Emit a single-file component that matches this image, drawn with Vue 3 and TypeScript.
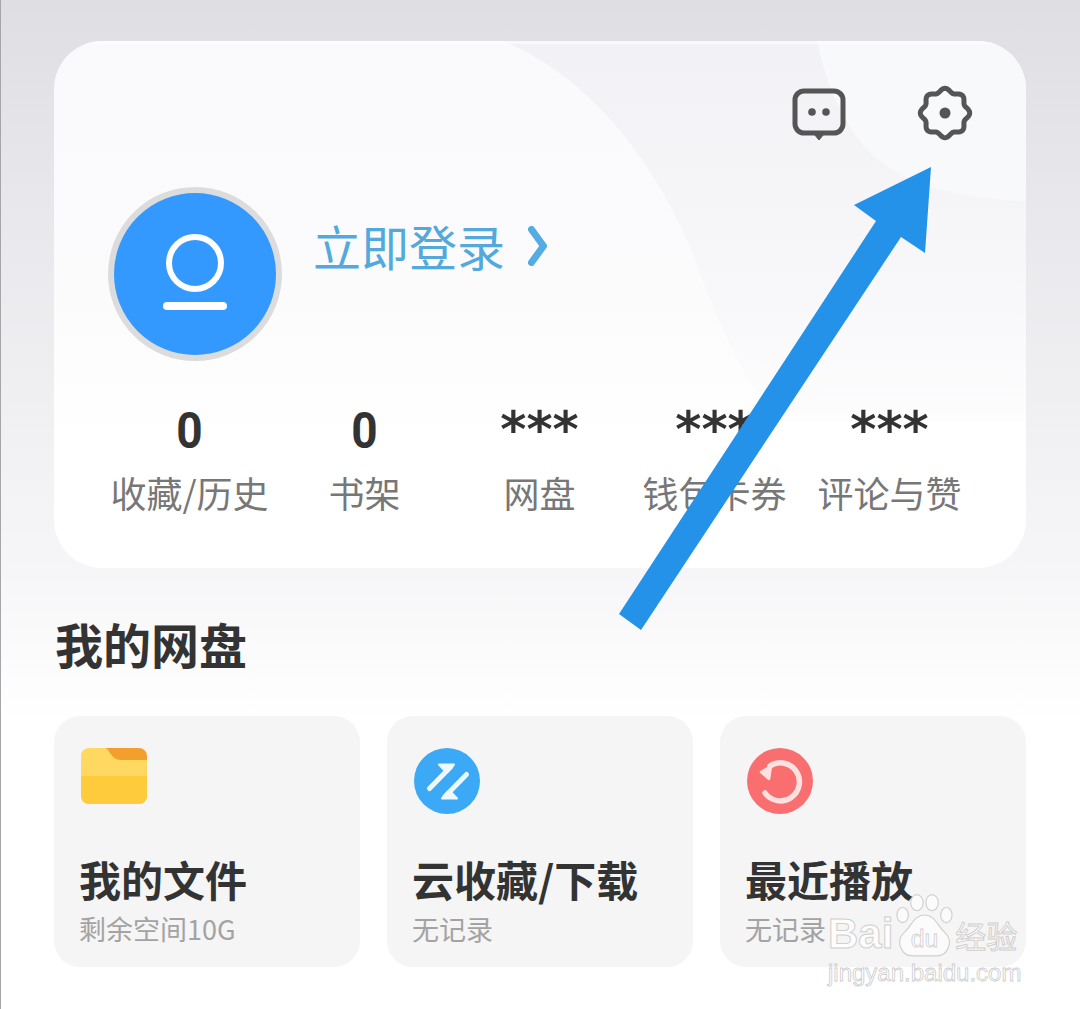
<script setup lang="ts">
const stats = [
  { value: '0', label: '收藏/历史' },
  { value: '0', label: '书架' },
  { value: '***', label: '网盘' },
  { value: '***', label: '钱包卡券' },
  { value: '***', label: '评论与赞' },
]
const tiles = [
  { title: '我的文件', sub: '剩余空间10G', kind: 'folder' },
  { title: '云收藏/下载', sub: '无记录', kind: 'sync' },
  { title: '最近播放', sub: '无记录', kind: 'recent' },
]
function buildGear(): string {
  const pts: string[] = []
  for (let i = 0; i < 160; i++) {
    const a = (i / 160) * Math.PI * 2
    const r = 22.8 + 1.9 * Math.cos(8 * a)
    const x = 28 + r * Math.sin(a)
    const y = 28 - r * Math.cos(a)
    pts.push(`${x.toFixed(2)} ${y.toFixed(2)}`)
  }
  return 'M' + pts.join('L') + 'Z'
}
const gearPath = buildGear()
</script>

<template>
  <div class="page">
    <section class="card">
      <svg class="swoosh" viewBox="0 0 972 527" aria-hidden="true">
        <defs>
          <linearGradient id="swa" gradientUnits="userSpaceOnUse" x1="0" y1="0" x2="0" y2="380">
            <stop offset="0" stop-color="#f2f2f6" />
            <stop offset="0.4" stop-color="#f5f5f8" />
            <stop offset="0.75" stop-color="#f9f9fb" />
            <stop offset="1" stop-color="#fdfdfe" />
          </linearGradient>
        </defs>
        <path d="M763 0H972V170H800Z" fill="#f8f9fb" />
        <path d="M450 0C540 40 600 120 640 215C660 270 680 320 720 380H972V160C900 158 840 140 810 105C785 75 770 35 763 0Z" fill="url(#swa)" />
        <rect x="0" y="0" width="972" height="3" fill="#ffffff" fill-opacity="0.55" />
      </svg>
      <div class="top">
        <svg class="chat" viewBox="0 0 54 54" fill="none">
          <path d="M12 3H42A9 9 0 0 1 51 12V36A9 9 0 0 1 42 45H12A9 9 0 0 1 3 36V12A9 9 0 0 1 12 3Z" stroke="#555" stroke-width="5" stroke-linejoin="round" />
          <path d="M22 46H32L27 52Z" fill="#555" stroke="#555" stroke-width="1" stroke-linejoin="round" />
          <circle cx="20" cy="24" r="3.800" fill="#555" />
          <circle cx="34" cy="24" r="3.800" fill="#555" />
        </svg>
        <svg class="gear" viewBox="0 0 56 56" fill="none">
          <path :d="gearPath" stroke="#555" stroke-width="5" stroke-linejoin="round" />
          <circle cx="28" cy="28" r="5.500" fill="#555" />
        </svg>
      </div>
      <div class="profile">
        <div class="avatar">
          <svg viewBox="0 0 162 162" fill="none">
            <circle cx="81" cy="70" r="26" stroke="#fff" stroke-width="6" />
            <path d="M53 113H109" stroke="#fff" stroke-width="8" stroke-linecap="round" />
          </svg>
        </div>
        <span class="login">立即登录</span>
        <svg class="chev" viewBox="0 0 20 40" fill="none">
          <path d="M3.500 3.500L15.500 20L3.500 36.500" stroke="#55ace2" stroke-width="7" stroke-linecap="round" stroke-linejoin="round" />
        </svg>
      </div>
      <div class="stats">
        <div v-for="s in stats" :key="s.label" class="stat">
          <div class="value" :class="{ stars: s.value === '***' }"><span>{{ s.value }}</span></div>
          <div class="label">{{ s.label }}</div>
        </div>
      </div>
    </section>

    <h2 class="heading">我的网盘</h2>

    <div class="tiles">
      <div v-for="t in tiles" :key="t.title" class="tile">
        <svg v-if="t.kind === 'folder'" class="ticon" viewBox="0 0 66 66">
          <path d="M8 0H58A8 8 0 0 1 66 8V20H20V0Z" fill="#f39f2e" />
          <path d="M8 0H24C28 0 30 12 40 12H66V48A8 8 0 0 1 58 56H8A8 8 0 0 1 0 48V8A8 8 0 0 1 8 0Z" fill="#ffd862" />
          <path d="M0 28H66V48A8 8 0 0 1 58 56H8A8 8 0 0 1 0 48Z" fill="#fdcb3b" />
        </svg>
        <svg v-else-if="t.kind === 'sync'" class="ticon" viewBox="0 0 66 66">
          <circle cx="33" cy="33" r="33" fill="#3ba9f5" />
          <g fill="#eef8ff" stroke="#eef8ff" stroke-linecap="round" stroke-linejoin="round">
            <path d="M15.500 40.500L37 18.500" fill="none" stroke-width="5" />
            <path d="M25 16.500H40L34 23.500H31.500Z" stroke-width="2" />
            <g transform="rotate(180 34 33.500)">
              <path d="M15.500 40.500L37 18.500" fill="none" stroke-width="5" />
              <path d="M25 16.500H40L34 23.500H31.500Z" stroke-width="2" />
            </g>
          </g>
        </svg>
        <svg v-else class="ticon" viewBox="0 0 66 66">
          <circle cx="33" cy="33" r="33" fill="#f96f70" />
          <path d="M23 18A19 19 0 1 1 18 45" fill="none" stroke="#fde0e0" stroke-width="5.500" stroke-linecap="round" />
          <path d="M24 18L14 24L22 31Z" fill="#fde0e0" stroke="#fde0e0" stroke-width="2.500" stroke-linejoin="round" />
        </svg>
        <div class="ttitle">{{ t.title }}</div>
        <div class="tsub">{{ t.sub }}</div>
      </div>
    </div>

    <svg class="arrow" viewBox="0 0 1080 1009" aria-hidden="true">
      <path d="M619 614L641 630L901 237L925 253L931 167L854 205L876 221Z" fill="#2492e8" />
    </svg>

    <div class="mark">
      <div class="mark-row">
        <span class="mark-bai">Bai</span>
        <svg class="paw" viewBox="0 0 60 66">
          <g fill="#ffffff" fill-opacity="0.6" stroke="#cfcfcf" stroke-width="1.200">
            <ellipse cx="7" cy="22" rx="6" ry="8" />
            <ellipse cx="22" cy="9" rx="6.500" ry="8.500" />
            <ellipse cx="38" cy="9" rx="6.500" ry="8.500" />
            <ellipse cx="53" cy="22" rx="6" ry="8" />
            <path d="M30 22C41 22 43 33 52 41C61 50 54 65 43 65H17C6 65 -1 50 8 41C17 33 19 22 30 22Z" />
          </g>
          <text x="30" y="56" text-anchor="middle" font-family="Liberation Sans, sans-serif" font-size="26" fill="#fff" stroke="#cfcfcf" stroke-width="0.800">du</text>
        </svg>
        <span class="mark-cn">经验</span>
      </div>
      <div class="mark-url">jingyan.baidu.com</div>
    </div>
  </div>
</template>

<style scoped>
.page {
  position: relative;
  box-sizing: border-box;
  width: 1080px;
  height: 1009px;
  padding: 41px 0 0 53px;
  overflow: hidden;
  background: linear-gradient(180deg, #dfdee3 0, #e8e8ec 200px, #f6f6f8 570px, #ffffff 720px);
  border-left: 1px solid #a6a6aa;
  font-family: "Noto Sans CJK SC", "Noto Sans", sans-serif;
  color: #333;
}
.card {
  position: relative;
  box-sizing: border-box;
  width: 972px;
  height: 527px;
  padding: 44px 53px 0 48px;
  border-radius: 48px;
  background: linear-gradient(180deg, #fafafc 0, #fbfbfc 250px, #ffffff 400px);
  overflow: hidden;
}
.swoosh {
  position: absolute;
  left: 0;
  top: 0;
  width: 972px;
  height: 527px;
}
.top {
  position: relative;
  display: flex;
  justify-content: flex-end;
  align-items: center;
  gap: 71px;
  height: 56px;
}
.chat { width: 54px; height: 54px; margin-top: 4px; }
.gear { width: 56px; height: 56px; }
.profile {
  position: relative;
  display: flex;
  align-items: center;
  margin: 46px 0 0 6px;
  height: 174px;
}
.avatar {
  box-sizing: border-box;
  flex: none;
  width: 174px;
  height: 174px;
  border: 6px solid #dcdcdc;
  border-radius: 50%;
  background: #3399fe;
}
.avatar svg { display: block; width: 162px; height: 162px; }
.login {
  margin: -58px 0 0 31px;
  font-size: 48px;
  line-height: 60px;
  color: #54a9dc;
}
.chev { width: 20px; height: 40px; margin: -56px 0 0 23px; }
.stats {
  position: relative;
  display: grid;
  grid-template-columns: repeat(5, 175px);
  margin-top: 40px;
}
.stat { text-align: center; }
.value {
  height: 58px;
  font-family: Roboto, sans-serif;
  font-size: 50px;
  font-weight: 700;
  line-height: 60px;
  color: #333;
}
.value span { display: inline-block; transform: scaleX(0.92); }
.value.stars { font-family: "DejaVu Sans", sans-serif; font-size: 50px; line-height: 58px; }
.value.stars span { transform: none; }
.label {
  margin-top: 8px;
  font-size: 36px;
  line-height: 50px;
  color: #777;
}
.heading {
  margin: 46px 0 0 1px;
  font-size: 48px;
  font-weight: 700;
  line-height: 58px;
  color: #333;
}
.tiles {
  display: grid;
  grid-template-columns: repeat(3, 306px);
  gap: 27px;
  margin-top: 44px;
}
.tile {
  box-sizing: border-box;
  height: 251px;
  padding: 32px 27px 0;
  border-radius: 26px;
  background: #f5f5f5;
}
.ticon { display: block; width: 66px; height: 66px; }
.ttitle {
  margin: 40px 0 0 -2px;
  font-size: 42px;
  font-weight: 700;
  line-height: 50px;
  white-space: nowrap;
  color: #333;
}
.tsub {
  margin: 5px 0 0 -2px;
  font-size: 27px;
  line-height: 40px;
  color: #a3a3a3;
}
.arrow {
  position: absolute;
  left: -1px;
  top: 0;
  width: 1080px;
  height: 1009px;
  pointer-events: none;
}
.mark {
  position: absolute;
  left: 827px;
  top: 891px;
  width: 200px;
  pointer-events: none;
}
.mark-row { display: flex; align-items: flex-end; height: 66px; }
.mark-bai {
  font-family: "Liberation Sans", sans-serif;
  font-size: 42px;
  font-weight: 700;
  line-height: 46px;
  color: rgba(255, 255, 255, 0.85);
  -webkit-text-stroke: 1px #cfcfcf;
}
.paw { flex: none; width: 57px; height: 63px; margin-left: 3px; }
.mark-cn {
  margin-left: 2px;
  font-size: 31px;
  line-height: 44px;
  color: rgba(255, 255, 255, 0.85);
  -webkit-text-stroke: 1px #cfcfcf;
}
.mark-url {
  margin-top: 2px;
  font-family: "Liberation Sans", sans-serif;
  font-size: 24px;
  line-height: 28px;
  white-space: nowrap;
  color: rgba(255, 255, 255, 0.8);
  -webkit-text-stroke: 0.8px #cccccc;
}
</style>

<style>
html, body { margin: 0; background: #fff; }
</style>
